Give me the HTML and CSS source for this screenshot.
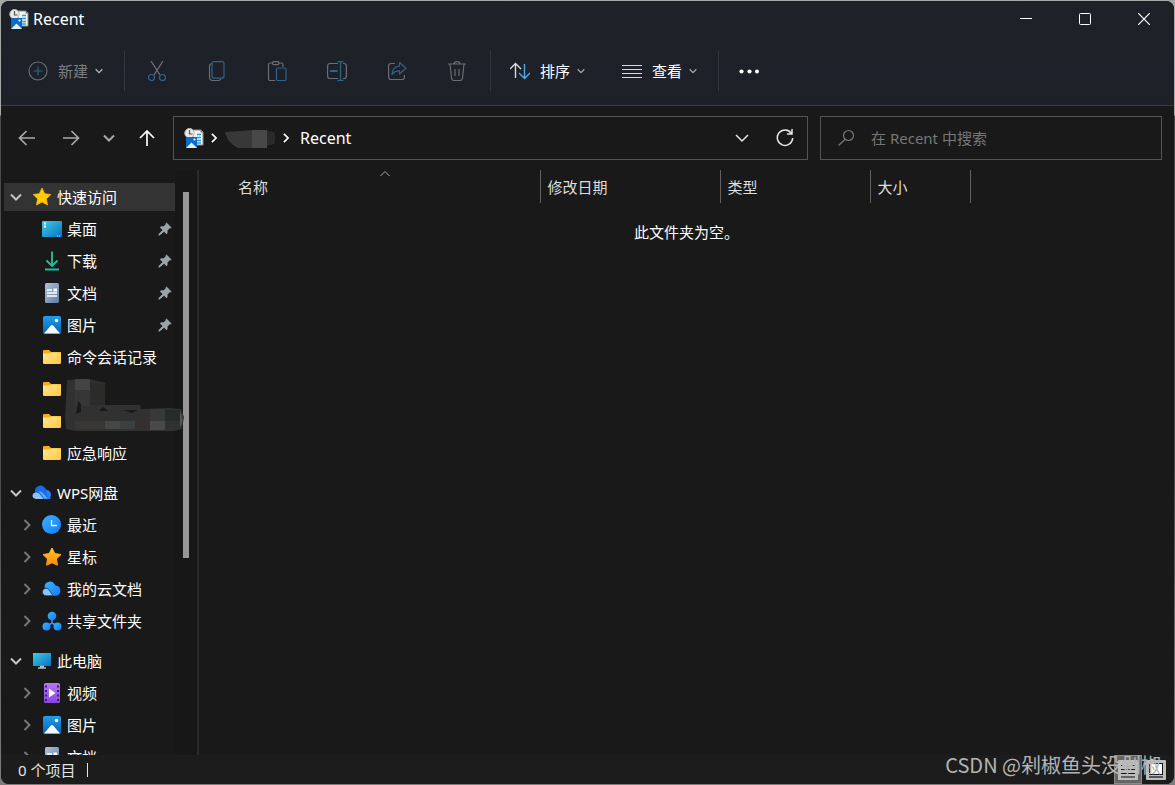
FILE: index.html
```html
<!DOCTYPE html>
<html lang="zh-CN">
<head>
<meta charset="utf-8">
<title>Recent</title>
<link rel="stylesheet" href="styles.css">
</head>
<body>
<svg class="defs" width="0" height="0" aria-hidden="true">
  <defs>
    <linearGradient id="g-desk" x1="0" y1="0" x2="1" y2="1"><stop offset="0" stop-color="#3ccfe0"/><stop offset="1" stop-color="#0c6fc6"/></linearGradient>
    <linearGradient id="g-blue" x1="0" y1="0" x2="0" y2="1"><stop offset="0" stop-color="#1f9fea"/><stop offset="1" stop-color="#0b5fb4"/></linearGradient>
    <linearGradient id="g-doc" x1="0" y1="0" x2="1" y2="1"><stop offset="0" stop-color="#b3c2d6"/><stop offset="1" stop-color="#5d7ea3"/></linearGradient>
    <linearGradient id="g-fold" x1="0" y1="0" x2="1" y2="1"><stop offset="0" stop-color="#ffe69a"/><stop offset="1" stop-color="#ffc83a"/></linearGradient>
    <linearGradient id="g-down" gradientUnits="userSpaceOnUse" x1="0" y1="0" x2="16" y2="20"><stop offset="0" stop-color="#35d27e"/><stop offset="1" stop-color="#14b8a8"/></linearGradient>
    <linearGradient id="g-star" x1="0" y1="0" x2="0" y2="1"><stop offset="0" stop-color="#ffc81e"/><stop offset="1" stop-color="#ff8a12"/></linearGradient>
    <linearGradient id="g-vid" x1="0" y1="0" x2="0" y2="1"><stop offset="0" stop-color="#b677f2"/><stop offset="1" stop-color="#8746e0"/></linearGradient>
    <linearGradient id="g-az" x1="0" y1="0" x2="1" y2="1"><stop offset="0" stop-color="#3fb0ff"/><stop offset="1" stop-color="#0f7dff"/></linearGradient>
    <symbol id="i-recent" viewBox="0 0 20 20">
      <path d="M9 2h8l2 2v13H9z" fill="#f4f4f2" stroke="#8b8b86"/>
      <path d="M16.500 1.500v3h3z" fill="#777"/>
      <path d="M13 6.500h4M13 9.500h4M13 12.500h4M13 15h4" stroke="#2b9be0" stroke-width="1.300"/>
      <circle cx="5.500" cy="5.200" r="4.700" fill="#e9e9e7" stroke="#bcbcba"/>
      <path d="M5.500 2v4h3" fill="none" stroke="#555" stroke-width="1.200"/>
      <path d="M2 9h11v11H2z" fill="#0b6cc8"/>
      <path d="M2 20l5.500-5.500L13 20z" fill="#d8f1ff"/>
      <circle cx="10.500" cy="11.500" r="1.100" fill="#fff"/>
    </symbol>
    <symbol id="i-star1" viewBox="0 0 20 20"><path d="M10 1l2.700 5.700 6.200.8-4.500 4.300 1.100 6.200L10 15l-5.500 3 1.100-6.200L1.100 7.500l6.200-.8z" fill="#fc0" stroke="#f7b50c" stroke-width=".8" stroke-linejoin="round"/></symbol>
    <symbol id="i-star2" viewBox="0 0 20 20"><path d="M10 1l2.800 5.600 6.200.9-4.500 4.400 1 6.300-5.500-2.400-5.500 2.400 1-6.300L1 7.500l6.200-.9z" fill="url(#g-star)" stroke="url(#g-star)" stroke-linejoin="round"/></symbol>
    <symbol id="i-desk" viewBox="0 0 20 20"><rect y="2" width="20" height="16" rx="1" fill="url(#g-desk)"/><path d="M2 4.500h2M2 7.500h2" stroke="#fff" stroke-width="2"/><path d="M15 17h1M17 17h1" stroke="#cfe8ff"/></symbol>
    <symbol id="i-down" viewBox="0 0 20 20"><path d="M10 .500v14M4.500 9.500l5.500 5.500 5.500-5.500M3 18.500h14" fill="none" stroke="url(#g-down)" stroke-width="1.800"/></symbol>
    <symbol id="i-doc" viewBox="0 0 20 20"><rect x="3" width="14" height="20" rx="1.500" fill="url(#g-doc)"/><path d="M5 7h5M5 10h10M5 13h10" stroke="#fff" stroke-width="1.400"/><path d="M11.500 5.500h3.500v3h-3.500z" fill="#fff"/></symbol>
    <symbol id="i-pic" viewBox="0 0 20 20"><rect x="1" y="1" width="18" height="18" rx="1.500" fill="url(#g-blue)"/><path d="M2 18.500l6.800-8q1.200-1 2.400 0l6.800 8z" fill="#f2faff"/><circle cx="14.500" cy="5.500" r="1.700" fill="#fff"/></symbol>
    <symbol id="i-fold" viewBox="0 0 20 20"><path d="M1 4q0-1 1-1h5l2 2h9q1 0 1 1v10H1z" fill="#f5ac12"/><path d="M1 6.500h6.500L9 5.500h10V16q0 1-1 1H2q-1 0-1-1z" fill="url(#g-fold)"/></symbol>
    <symbol id="i-wps" viewBox="0 0 20 20"><path d="M3 9A5.500 5.500 0 0112.500 4.500l3 3.500 3.500 8H9z" fill="#1769e8"/><path d="M14 7a4.500 4.500 0 015 4.500q0 3.500-3 4.500z" fill="#2f7df0"/><path d="M4 16Q.5 15.500.5 12.500 1 9.500 4 9.500q2.500 0 4 2L11.500 16z" fill="#8ec3ff"/><path d="M5 8.500Q9 6.500 12 10.500l4.500 5.500H12L9 11.500Q7 9 5 8.500z" fill="#57a6ff" stroke="#134f9f" stroke-width=".4"/></symbol>
    <symbol id="i-clock" viewBox="0 0 20 20"><circle cx="9.500" cy="9.500" r="9.500" fill="url(#g-az)"/><path d="M9.500 5v5.500H15" fill="none" stroke="#e9f5ff" stroke-width="1.300"/></symbol>
    <symbol id="i-cloud" viewBox="0 0 20 20"><path d="M2.500 8.500A5.500 5.500 0 0112.500 5l1 1.500a5.200 5.200 0 011 10.200H10L7 11Q5.500 8.500 2.500 8.500z" fill="url(#g-az)"/><path d="M4 16.700a3.700 3.700 0 113-6l4 6z" fill="#86c6ff" stroke="#191919" stroke-width=".6"/></symbol>
    <symbol id="i-share3" viewBox="0 0 20 20"><path d="M10 6v6L5 15M10 12l5 3" stroke="#2d95ff" stroke-width="1.500" fill="none"/><circle cx="10" cy="5" r="4.300" fill="url(#g-az)"/><circle cx="4.500" cy="15.500" r="4" fill="url(#g-az)"/><circle cx="15.500" cy="15.500" r="4" fill="url(#g-az)"/></symbol>
    <symbol id="i-pc" viewBox="0 0 20 20"><rect x="1" y="2" width="18" height="13" fill="url(#g-desk)"/><path d="M6 17h8M8 15.500h4" stroke="#b3bcc4" stroke-width="1.300"/></symbol>
    <symbol id="i-vid" viewBox="0 0 20 20"><rect x="2" width="16" height="20" rx="1.500" fill="url(#g-vid)"/><path d="M4 2.500v16M16 2.500v16" stroke="#3d1d78" stroke-width="2" stroke-dasharray="2 2.500"/><path d="M7 5.500l6.500 4.500L7 14.500z" fill="#fff"/></symbol>
    <symbol id="i-pin" viewBox="0 0 14 14"><path d="M8.500.500L13.500 5.500q-.5 1-2 1L9.500 8.500q.5 2.500-.8 3.800L6 9.700 1.700 13.500.5 13.500V12.300L4.500 8 1.800 5.300Q3 4 5.500 4.500L7.500 2.500q0-1.500 1-2z" fill="#9aa3aa"/></symbol>
    <symbol id="i-vee" viewBox="0 0 12 12"><path d="M1 3.500l5 5 5-5" fill="none" stroke="currentColor" stroke-width="2"/></symbol>
    <symbol id="i-gt" viewBox="0 0 12 12"><path d="M3.500 1l5 5-5 5" fill="none" stroke="currentColor" stroke-width="2"/></symbol>
    <symbol id="i-thin" viewBox="0 0 12 12"><path d="M2 4l4 4 4-4" fill="none" stroke="currentColor" stroke-width="1.600"/></symbol>
  </defs>
</svg>

<div class="window">
  <header class="chrome">
    <div class="titlebar">
      <svg class="i20"><use href="#i-recent"/></svg>
      <h1 class="title">Recent</h1>
      <div class="caption">
        <button class="cap" aria-label="最小化"><svg class="i12" viewBox="0 0 12 12"><path d="M0 5.500h12" stroke="#fff"/></svg></button>
        <button class="cap" aria-label="最大化"><svg class="i12" viewBox="0 0 12 12"><rect x=".5" y=".5" width="11" height="11" rx="1" fill="none" stroke="#fff"/></svg></button>
        <button class="cap" aria-label="关闭"><svg class="i12" viewBox="0 0 12 12"><path d="M0 0l12 12M12 0L0 12" stroke="#fff" stroke-width="1.200"/></svg></button>
      </div>
    </div>
    <div class="toolbar">
      <button class="tool tool-new" disabled>
        <svg class="i20" viewBox="0 0 20 20" fill="none"><circle cx="10" cy="10" r="9" stroke="#6b6d72" stroke-width="1.200"/><path d="M10 5.500v9M5.500 10h9" stroke="#2f6484" stroke-width="1.200"/></svg>
        <span>新建</span><svg class="i10"><use href="#i-thin"/></svg>
      </button>
      <span class="sep"></span>
      <div class="icons">
        <button class="tool-icon" disabled aria-label="剪切"><svg class="i20" viewBox="0 0 20 20" fill="none" stroke-width="1.200"><path d="M4 0l9 14M16 0L7 14" stroke="#73757a"/><circle cx="4.500" cy="16.500" r="3" stroke="#2d6586"/><circle cx="15.500" cy="16.500" r="3" stroke="#2d6586"/></svg></button>
        <button class="tool-icon" disabled aria-label="复制"><svg class="i20" viewBox="0 0 20 20" fill="none" stroke-width="1.200"><path d="M4.500 2.500Q2.500 3 2.500 5v11q0 3.500 3.500 3.500h5q2 0 3-1.500" stroke="#6b6d72"/><rect x="5" y=".6" width="12" height="16.500" rx="2" stroke="#2d6586"/></svg></button>
        <button class="tool-icon" disabled aria-label="粘贴"><svg class="i20" viewBox="0 0 20 20" fill="none" stroke-width="1.200"><path d="M6 2H3Q1.500 2 1.500 3.500V18q0 1.500 1.500 1.500h5M11 2h3.500q1.500 0 1.500 1.500V6" stroke="#6b6d72"/><rect x="5.500" y=".6" width="6.500" height="3" rx="1.400" stroke="#6b6d72"/><rect x="9.500" y="7" width="9.500" height="12.500" rx="1.500" stroke="#2d6586"/></svg></button>
        <button class="tool-icon" disabled aria-label="重命名"><svg class="i20" viewBox="0 0 20 20" fill="none" stroke-width="1.200"><path d="M11 2.500H3Q.6 2.500.6 5v10q0 2.500 2.400 2.500h8M16 2.500h1q2.400 0 2.400 2.500v10q0 2.500-2.400 2.500h-1" stroke="#6b6d72"/><path d="M3 10h7.500" stroke="#2d6586" stroke-width="2"/><path d="M13.500.600v18.800M10.500.600h6M10.500 19.400h6" stroke="#2d6586"/></svg></button>
        <button class="tool-icon" disabled aria-label="共享"><svg class="i20" viewBox="0 0 20 20" fill="none" stroke-width="1.200" stroke-linejoin="round"><path d="M8 2.500H4Q1.600 2.500 1.600 5v11q0 2.500 2.400 2.500h11q2.400 0 2.400-2.500v-2" stroke="#6b6d72"/><path d="M12.500 1.500L19 7.300l-6.500 5.700V9.800Q8 9.500 5 13.500q.5-8 7.500-8.500z" stroke="#2d6586"/></svg></button>
        <button class="tool-icon" disabled aria-label="删除"><svg class="i20" viewBox="0 0 20 20" fill="none" stroke="#6b6d72" stroke-width="1.200"><path d="M1 3h18M7 3q0-2.400 3-2.400T13 3M3 3l1.500 14q.3 2.500 2.500 2.500h6q2.200 0 2.500-2.500L17 3M8 8v7M12 8v7"/></svg></button>
      </div>
      <span class="sep"></span>
      <button class="tool tool-sort">
        <svg class="i20" viewBox="0 0 20 20" fill="none" stroke-width="1.400"><path d="M5.500 17V2.500M0 8l5.500-5.500L11 8" stroke="#dcdcdc"/><path d="M14.500 3v14.500M9 12l5.500 5.500L20 12" stroke="#45aeea"/></svg>
        <span>排序</span><svg class="i10"><use href="#i-thin"/></svg>
      </button>
      <button class="tool tool-view">
        <svg class="i20" viewBox="0 0 20 20" stroke="#d8d8d8" stroke-width="1"><path d="M0 4.500h20M0 8.500h20M0 12.500h20M0 16.500h20"/></svg>
        <span>查看</span><svg class="i10"><use href="#i-thin"/></svg>
      </button>
      <span class="sep"></span>
      <button class="tool tool-more" aria-label="更多"><svg class="i20" viewBox="0 0 20 20" fill="#fff"><circle cx="2.500" cy="10.500" r="2.100"/><circle cx="10.500" cy="10.500" r="2.100"/><circle cx="18" cy="10.500" r="2"/></svg></button>
    </div>
  </header>

  <nav class="navrow">
    <button class="nav" aria-label="后退"><svg class="i18" viewBox="0 0 18 18"><path d="M17 9H2M8.500 2L1.500 9l7 7"/></svg></button>
    <button class="nav" aria-label="前进"><svg class="i18" viewBox="0 0 18 18"><path d="M1 9h15M9.500 2l7 7-7 7"/></svg></button>
    <button class="nav nav-small" aria-label="最近的位置"><svg class="i12"><use href="#i-vee"/></svg></button>
    <button class="nav nav-on" aria-label="上移"><svg class="i18" viewBox="0 0 18 18"><path d="M9 17V2M2 9l7-7 7 7"/></svg></button>
    <div class="address">
      <svg class="i20"><use href="#i-recent"/></svg>
      <svg class="i10"><use href="#i-gt"/></svg>
      <svg class="redact" viewBox="0 0 52 20"><path d="M1 5Q0 4 3 4L30 2l20 2 1 6-1 6-7 1-4 3H14Q8 17 4 12z" fill="#383838"/><path d="M28 2h15v18H28z" fill="#484848"/><path d="M43 4h7l1 7-2 5h-6z" fill="#2a2a2a"/></svg>
      <svg class="i10"><use href="#i-gt"/></svg>
      <span class="crumb">Recent</span>
      <button class="addr-btn" aria-label="历史记录"><svg class="i14" viewBox="0 0 14 14"><path d="M1 4l6 6 6-6"/></svg></button>
      <button class="addr-btn" aria-label="刷新"><svg class="i18" viewBox="0 0 18 18"><path d="M15.500 4.500A7.700 7.700 0 1016.700 9M16 0v5h-5"/></svg></button>
    </div>
    <label class="search">
      <svg class="i18" viewBox="0 0 18 18"><circle cx="11.500" cy="6.500" r="5"/><path d="M8 10.500L1.500 16.500"/></svg>
      <input type="search" placeholder="在 Recent 中搜索" aria-label="搜索">
    </label>
  </nav>

  <main class="body">
    <aside class="side">
      <ul class="tree">
        <li class="row root selected"><svg class="i12 tw"><use href="#i-vee"/></svg><svg class="i20"><use href="#i-star1"/></svg><span>快速访问</span></li>
        <li class="row"><svg class="i20"><use href="#i-desk"/></svg><span>桌面</span><svg class="pin"><use href="#i-pin"/></svg></li>
        <li class="row"><svg class="i20"><use href="#i-down"/></svg><span>下载</span><svg class="pin"><use href="#i-pin"/></svg></li>
        <li class="row"><svg class="i20"><use href="#i-doc"/></svg><span>文档</span><svg class="pin"><use href="#i-pin"/></svg></li>
        <li class="row"><svg class="i20"><use href="#i-pic"/></svg><span>图片</span><svg class="pin"><use href="#i-pin"/></svg></li>
        <li class="row"><svg class="i20"><use href="#i-fold"/></svg><span>命令会话记录</span></li>
        <li class="row"><svg class="i20"><use href="#i-fold"/></svg>
          <svg class="smudge" viewBox="0 0 119 52"><path d="M2 1l22-1 16 4v22h35l1 4 28-1 12 1 3 8-2 12-8 2H11L1 50 0 40z" fill="#303130"/><path d="M10 0h15v11H10z" fill="#444"/><path d="M10 11h15v16H10z" fill="#363636"/><path d="M25 3l15 3v20H25z" fill="#2b2b2a"/><path d="M10 42h30v8H10z" fill="#383736"/><path d="M40 42h15v8H40z" fill="#464645"/><path d="M55 42h15v8H55z" fill="#3b3f3f"/><path d="M70 42h15v8H70z" fill="#352f2e"/><path d="M85 42h15v9H85z" fill="#494949"/><path d="M85 30h15v12H85z" fill="#383838"/><path d="M100 31h15v11h-15z" fill="#262a2a"/><path d="M13 22l3 3v8l-5 2zM34 32l4-4 5 4zM58 31h15l-6 3z" fill="#191919"/><path d="M115 32q5 9 0 17z" fill="#555"/></svg>
        </li>
        <li class="row"><svg class="i20"><use href="#i-fold"/></svg></li>
        <li class="row"><svg class="i20"><use href="#i-fold"/></svg><span>应急响应</span></li>
      </ul>
      <ul class="tree">
        <li class="row root"><svg class="i12 tw"><use href="#i-vee"/></svg><svg class="i20"><use href="#i-wps"/></svg><span>WPS网盘</span></li>
        <li class="row sub"><svg class="i12 tw"><use href="#i-gt"/></svg><svg class="i20"><use href="#i-clock"/></svg><span>最近</span></li>
        <li class="row sub"><svg class="i12 tw"><use href="#i-gt"/></svg><svg class="i20"><use href="#i-star2"/></svg><span>星标</span></li>
        <li class="row sub"><svg class="i12 tw"><use href="#i-gt"/></svg><svg class="i20"><use href="#i-cloud"/></svg><span>我的云文档</span></li>
        <li class="row sub"><svg class="i12 tw"><use href="#i-gt"/></svg><svg class="i20"><use href="#i-share3"/></svg><span>共享文件夹</span></li>
      </ul>
      <ul class="tree">
        <li class="row root"><svg class="i12 tw"><use href="#i-vee"/></svg><svg class="i20"><use href="#i-pc"/></svg><span>此电脑</span></li>
        <li class="row sub"><svg class="i12 tw"><use href="#i-gt"/></svg><svg class="i20"><use href="#i-vid"/></svg><span>视频</span></li>
        <li class="row sub"><svg class="i12 tw"><use href="#i-gt"/></svg><svg class="i20"><use href="#i-pic"/></svg><span>图片</span></li>
        <li class="row sub"><svg class="i12 tw"><use href="#i-gt"/></svg><svg class="i20"><use href="#i-doc"/></svg><span>文档</span></li>
      </ul>
    </aside>
    <div class="scroll"><div class="thumb"></div></div>
    <section class="files">
      <table class="list">
        <thead><tr>
          <th class="c-name">名称<svg class="sort" viewBox="0 0 12 12"><path d="M1.500 8L6 3.500 10.500 8" fill="none" stroke="#a8a8a8"/></svg></th>
          <th class="c-date">修改日期</th><th class="c-type">类型</th><th class="c-size">大小</th><th class="c-rest"></th>
        </tr></thead>
        <tbody><tr><td class="empty" colspan="5">此文件夹为空。</td></tr></tbody>
      </table>
    </section>
  </main>

  <footer class="status">
    <span class="count">0 个项目</span>
    <div class="views">
      <button class="vbtn on" aria-label="详细信息"><svg class="i20" viewBox="0 0 20 20"><rect width="20" height="20" rx="1" fill="#bdbdbd"/><path d="M3 5.500h14M3 9.500h14M3 13.500h14M3 17h14" stroke="#111" stroke-width="1.200"/></svg></button>
      <button class="vbtn" aria-label="大图标"><svg class="i20" viewBox="0 0 20 20"><rect width="20" height="20" rx="1" fill="#bdbdbd"/><rect x="3.500" y="3.500" width="13" height="11" fill="#fff" stroke="#111"/><path d="M3 17h14" stroke="#111" stroke-width="1.200"/></svg></button>
    </div>
  </footer>
  <div class="mark">CSDN @剁椒鱼头没剁椒</div>
</div>
</body>
</html>
```
FILE: styles.css
```css
* { box-sizing: border-box; }
body {
  margin: 0;
  height: 100vh;
  padding: 1px;
  background: linear-gradient(#a6a8a8 0, #a6a8a8 115px, #4a4a4a 116px, #4a4a4a 60%, #7c7c7c);
  color: #fff;
  font: 15px/20px "Noto Sans", "Noto Sans CJK SC", sans-serif;
}
button, input { font: inherit; color: inherit; border: 0; padding: 0; background: none; }
svg { display: block; flex: none; }
.defs { position: absolute; }
.i10 { width: 10px; height: 10px; }
.i12 { width: 12px; height: 12px; }
.i14 { width: 14px; height: 14px; }
.i18 { width: 18px; height: 18px; }
.i20 { width: 20px; height: 20px; }

.window {
  position: relative;
  display: flex;
  flex-direction: column;
  height: 100%;
  overflow: hidden;
  border-radius: 8px;
  background: #191919;
}
.chrome { background: linear-gradient(#1d2227, #1e2029); border-bottom: 1px solid #3a3a3a; }
.titlebar { display: flex; align-items: center; height: 36px; padding: 0 1px 0 8px; gap: 4px; }
.title { margin: 0; font-size: 16px; font-weight: 400; }
.caption { display: flex; align-self: stretch; margin-left: auto; }
.cap { display: grid; place-items: center; width: 59px; }

.toolbar { display: flex; align-items: center; height: 68px; padding-left: 1px; }
.tool { display: flex; align-items: center; height: 40px; }
.tool span { margin: 0 6px 0 10px; }
.tool-new { padding: 0 20px 0 26px; color: #7b7d81; }
.tool-new .i10 { color: #b5b5b5; }
.tool-sort { padding: 0 18px 0 19px; }
.tool-view { padding: 0 20px 0 18px; }
.tool-sort .i10, .tool-view .i10 { color: #a5a5a5; }
.tool-more { padding: 0 20px; }
.sep { width: 1px; height: 40px; background: #33363d; }
.icons { display: flex; padding: 0 3px 0 2px; }
.tool-icon { display: grid; place-items: center; width: 60px; height: 40px; }

.navrow { display: flex; align-items: center; gap: 8px; padding: 10px 12px 10px 8px; }
.nav { display: grid; place-items: center; width: 36px; height: 36px; color: #a9a9a9; }
.nav-small { width: 24px; }
.nav-on { color: #fff; }
.nav path { fill: none; stroke: currentColor; stroke-width: 1.7; }
.address, .search { display: flex; align-items: center; height: 44px; border: 1px solid #535353; }
.address { flex: 635 1 635px; padding: 0 6px 0 10px; gap: 5px; }
.redact { width: 52px; height: 20px; }
.crumb { margin: 0 auto 0 4px; font-size: 16px; }
.addr-btn { display: grid; place-items: center; width: 32px; height: 32px; }
.addr-btn + .addr-btn { margin-left: 6px; }
.addr-btn path { fill: none; stroke: #e6e6e6; stroke-width: 1.5; }
.search { flex: 342 1 342px; margin-left: 4px; padding: 0 16px; gap: 16px; }
.search svg { fill: none; stroke: #777; stroke-width: 1.2; }
.search input { flex: 1; min-width: 0; outline: 0; }
.search input::placeholder { color: #777; opacity: 1; }

.body { display: flex; flex: 1; min-height: 0; overflow: hidden; }
.side { width: 174px; padding: 11px 0 0 3px; }
.tree { margin: 0 0 8px; padding: 0; list-style: none; }
.row { position: relative; display: flex; align-items: center; height: 32px; gap: 5px; padding: 0 3px 0 38px; white-space: nowrap; }
.root { padding-left: 6px; }
.root .tw { margin-right: 5px; color: #c4c4c4; }
.sub { padding-left: 17px; }
.sub .tw { margin-right: 4px; color: #777; }
.selected { height: 28px; margin: 2px 0; background: #333; }
.pin { width: 14px; height: 14px; margin-left: auto; }
.smudge { position: absolute; z-index: 1; left: 61px; top: 6px; width: 119px; height: 52px; }
.scroll { width: 24px; padding: 22px 0 0 8px; border-right: 2px solid #2b2b2b; background: #171717; }
.thumb { width: 6px; height: 65%; background: #999696; }

.files { flex: 1; min-width: 0; }
.list { width: 100%; border-collapse: collapse; table-layout: fixed; }
.list th { position: relative; height: 33px; padding: 0 0 0 7px; border-right: 1px solid #626262; color: #dedede; font-weight: 400; text-align: left; }
.list .c-name { width: 341px; padding-left: 39px; }
.c-date { width: 180px; }
.c-type { width: 150px; }
.c-size { width: 100px; }
.list .c-rest { border: 0; }
.sort { position: absolute; left: 180px; top: -2px; width: 12px; height: 12px; }
.empty { padding: 19px 0; text-align: center; }

.status { display: flex; align-items: center; height: 29px; padding: 0 4px 0 17px; background: #1c1c1c; color: #e4e4e4; }
.count { line-height: 14px; padding-right: 12px; border-right: 1px solid #e4e4e4; }
.views { display: flex; align-self: stretch; margin-left: auto; }
.vbtn { display: grid; place-items: center; width: 28px; }
.vbtn.on { background: #666; outline: 1px solid #8a8a8a; outline-offset: -1px; }
.mark { position: absolute; right: 13px; bottom: 6px; color: #b4b4b4; font: 20px/26px "Noto Sans CJK SC", sans-serif; white-space: nowrap; }
```
